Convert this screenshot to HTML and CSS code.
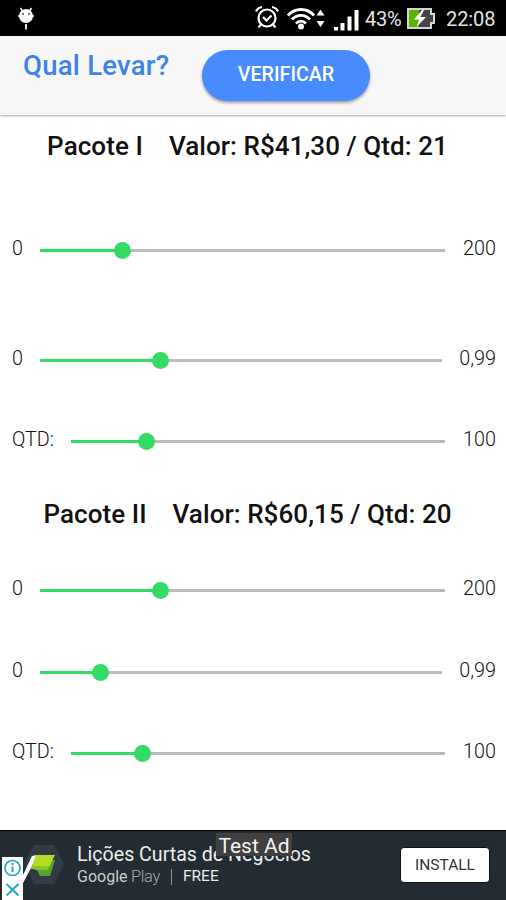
FILE: index.html
```html
<!DOCTYPE html>
<html lang="pt-BR">
<head>
    <meta charset="UTF-8">
    <meta name="viewport" content="width=device-width, initial-scale=1.0">
    <title>Qual Levar?</title>
    <link rel="stylesheet" href="styles.css">
</head>
<body>
    <div class="status-bar">
        <svg class="icon-debug" width="18" height="24" viewBox="0 0 18 24">
            <path d="M3.500 1l2 3M14.500 1l-2 3" stroke="#fff" stroke-width="1.5"/>
            <ellipse cx="9" cy="9" rx="7" ry="7" fill="#fff"/>
            <path d="M1 9h16" stroke="#fff" stroke-width="1.5"/>
            <path d="M9 17v5.500" stroke="#ddd" stroke-width="2"/>
            <circle cx="6" cy="7" r="1.100" fill="#555"/>
            <circle cx="12" cy="7" r="1.100" fill="#555"/>
        </svg>
        <div class="status-right">
            <svg class="icon-alarm" width="24" height="24" viewBox="0 0 24 24" fill="none" stroke="#fff" stroke-width="2.200">
                <circle cx="12" cy="13" r="8.500"/>
                <path d="M1 6.500C2 4 4 2.500 7 2M23 6.500C22 4 20 2.500 17 2M6 19.500l-2.500 3M18 19.500l2.500 3M8 12l3.500 3.500 5-5"/>
            </svg>
            <svg class="icon-wifi" width="38" height="24" viewBox="0 0 38 24">
                <g fill="none" stroke="#fff" stroke-width="2.800">
                    <path d="M1 9.500C8 1.500 20 1.500 27 9.500"/>
                    <path d="M5 13.500c5-5.500 13-5.500 18 0"/>
                    <path d="M9 17.500c3-3 7-3 10 0"/>
                </g>
                <circle cx="14" cy="20.500" r="3" fill="#fff"/>
                <path d="M29.500 9.500l4-6 4 6zM29.500 15l4 6 4-6z" fill="#fff"/>
            </svg>
            <svg class="icon-signal" width="25" height="22" viewBox="0 0 25 22" fill="#fff">
                <rect x="0" y="18" width="4" height="3.500"/>
                <rect x="6.500" y="14" width="4" height="7.500"/>
                <rect x="13.500" y="7.500" width="4" height="14"/>
                <rect x="20.500" y="1" width="4" height="20.500"/>
            </svg>
            <span class="battery-text">43%</span>
            <svg class="icon-battery" width="28" height="21" viewBox="0 0 28 21">
                <path d="M1 1h23v5h3v9h-3v5H1z" fill="#444" stroke="#d4d4d4" stroke-width="2"/>
                <rect x="2" y="2" width="10" height="17" fill="#59b300"/>
                <path d="M15 2L7 11.500h5L9.500 19 19 9h-5.500L17 2z" fill="#fff"/>
            </svg>
            <span class="clock">22:08</span>
        </div>
    </div>

    <header class="header">
        <h1 class="header-title">Qual Levar?</h1>
        <button type="button" class="btn">VERIFICAR</button>
    </header>

    <main class="content">
        <section class="pacote">
            <h2 class="pacote-title first"><span>Pacote I</span><span>Valor: R$41,30 / Qtd: 21</span></h2>
            <div class="range-row reais">
                <span class="label">0</span>
                <div class="track"><div class="bar" style="width: 20.4%"></div></div>
                <span class="label">200</span>
            </div>
            <div class="range-row centavos spaced">
                <span class="label">0</span>
                <div class="track"><div class="bar" style="width: 30%"></div></div>
                <span class="label">0,99</span>
            </div>
            <div class="range-row qtd">
                <span class="label">QTD:</span>
                <div class="track"><div class="bar" style="width: 20.2%"></div></div>
                <span class="label">100</span>
            </div>
        </section>

        <section class="pacote">
            <h2 class="pacote-title second"><span>Pacote II</span><span>Valor: R$60,15 / Qtd: 20</span></h2>
            <div class="range-row reais">
                <span class="label">0</span>
                <div class="track"><div class="bar" style="width: 29.8%"></div></div>
                <span class="label">200</span>
            </div>
            <div class="range-row centavos">
                <span class="label">0</span>
                <div class="track"><div class="bar" style="width: 15%"></div></div>
                <span class="label">0,99</span>
            </div>
            <div class="range-row qtd">
                <span class="label">QTD:</span>
                <div class="track"><div class="bar" style="width: 19.1%"></div></div>
                <span class="label">100</span>
            </div>
        </section>
    </main>

    <footer class="ad">
        <svg class="ad-logo" width="44" height="46" viewBox="0 0 44 46">
            <path d="M12 2h20l10 19-10 20H12L2 21z" fill="#303c43"/>
            <path d="M0 34L10 13l5-1-5 11L0 42z" fill="#fff"/>
            <path d="M29 17h4l-5 16H18l-3-6h10z" fill="#58a52c"/>
            <path d="M14 12h19l-7 14H9z" fill="#b5dc25"/>
            <path d="M9 23h18l-2 4H13z" fill="#86c62b"/>
        </svg>
        <div class="ad-text">
            <div class="ad-title">Lições Curtas de Negócios</div>
            <div class="ad-info">
                <span class="ad-google">Google</span>
                <span class="ad-play">Play</span>
                <span class="ad-divider"></span>
                <span class="ad-free">FREE</span>
            </div>
        </div>
        <button type="button" class="ad-install">INSTALL</button>
        <div class="ad-test">Test Ad</div>
        <svg class="ad-choices" width="21" height="43" viewBox="0 0 21 43">
            <rect width="21" height="43" fill="#fff"/>
            <g fill="none" stroke="#20a9c5" stroke-width="1.700">
                <circle cx="10.500" cy="11" r="7.500"/>
                <path d="M10.500 9.500V15M4.500 27l12 11.500M16.500 27l-12 11.500" stroke-width="2"/>
            </g>
            <circle cx="10.500" cy="7" r="1.200" fill="#20a9c5"/>
        </svg>
    </footer>
</body>
</html>
```
FILE: styles.css
```css
* {
    margin: 0;
    padding: 0;
    box-sizing: border-box;
}

body {
    height: 900px;
    display: flex;
    flex-direction: column;
    overflow: hidden;
    background-color: #fff;
    color: #111;
    font-family: Roboto, sans-serif;
}

svg {
    display: block;
    flex: none;
}

.status-bar {
    height: 36px;
    flex: none;
    display: flex;
    justify-content: space-between;
    padding: 0 11px 0 17px;
    background-color: #000;
    color: #e4e4e4;
}

.icon-debug {
    margin-top: 7px;
}

.status-right {
    display: flex;
    align-items: flex-start;
    font-size: 20px;
    line-height: 38px;
}

.icon-alarm {
    margin: 5px 8px 0 0;
}

.icon-wifi {
    margin: 6px 9px 0 0;
}

.icon-signal {
    margin: 9px 6px 0 0;
}

.battery-text {
    width: 38px;
    letter-spacing: -0.3px;
}

.icon-battery {
    margin: 8px 11px 0 4px;
}

.clock {
    width: 49px;
    letter-spacing: -0.1px;
}

.header {
    height: 79px;
    flex: none;
    display: flex;
    align-items: flex-start;
    background-color: #f7f7f7;
    box-shadow: 0 1px 2px rgba(0, 0, 0, 0.35);
}

.header-title {
    width: 202px;
    padding: 13px 0 0 23px;
    color: #3e83e8;
    font-size: 27.5px;
    font-weight: 500;
    letter-spacing: 0.25px;
    line-height: 34px;
    white-space: nowrap;
}

.btn {
    width: 168px;
    height: 51px;
    margin-top: 14px;
    padding-bottom: 3px;
    border: none;
    border-radius: 26px;
    background-color: #488aff;
    box-shadow: 0 2px 3px rgba(0, 0, 0, 0.35);
    color: #fff;
    font-family: inherit;
    font-size: 19.7px;
    font-weight: 500;
}

.content {
    height: 715px;
    flex: none;
}

.pacote-title {
    display: flex;
    justify-content: center;
    gap: 26px;
    font-size: 26px;
    font-weight: 500;
    letter-spacing: 0.07px;
    line-height: 32px;
    white-space: nowrap;
}

.pacote-title.first {
    height: 95px;
    padding: 15px 11px 0 0;
}

.pacote-title.second {
    height: 67px;
    padding: 15px 11px 0 0;
}

.range-row {
    height: 81.6px;
    display: grid;
    align-items: center;
    padding: 0 10px 0 11px;
}

.reais {
    grid-template-columns: 29px 405px 1fr;
}

.centavos {
    grid-template-columns: 29px 402px 1fr;
}

.qtd {
    grid-template-columns: 60px 374px 1fr;
}

.spaced {
    margin-top: 28px;
}

.label {
    margin-top: -4px;
    padding-left: 1px;
    color: #111;
    font-size: 19.8px;
    font-weight: 300;
}

.label:last-child {
    text-align: right;
}

.track {
    height: 3px;
    background-color: #bdbdbd;
}

.bar {
    height: 3px;
    display: flex;
    align-items: center;
    justify-content: flex-end;
    background-color: #32db64;
}

.bar::after {
    content: "";
    flex: none;
    width: 17px;
    height: 17px;
    margin-right: -8.5px;
    border-radius: 50%;
    background-color: #32db64;
}

.ad {
    position: relative;
    height: 70px;
    flex: none;
    display: flex;
    align-items: flex-start;
    padding: 0 17px 0 22px;
    border-top: 1px solid #000;
    background-color: #222c32;
    color: #eee;
}

.ad-logo {
    margin-top: 12px;
}

.ad-text {
    flex: 1;
    padding: 10px 0 0 11px;
    white-space: nowrap;
}

.ad-title {
    font-size: 19.6px;
    line-height: 27px;
}

.ad-info {
    display: flex;
    align-items: center;
    font-size: 16.5px;
    line-height: 17px;
}

.ad-google {
    width: 54px;
    color: #ccc;
    font-size: 16px;
}

.ad-play {
    width: 40px;
    color: #aaa;
    font-weight: 300;
    letter-spacing: -0.4px;
}

.ad-divider {
    width: 1px;
    height: 16px;
    margin-right: 11px;
    background-color: #89939a;
}

.ad-free {
    font-size: 15.5px;
}

.ad-install {
    width: 90px;
    height: 36px;
    margin: 16px -1px 0 0;
    border: 1px solid #111;
    border-radius: 4px;
    background-color: #fff;
    color: #333;
    font-family: inherit;
    font-size: 15.5px;
}

/* overlays of the ad banner */
.ad-test {
    position: absolute;
    top: 2px;
    left: 216px;
    width: 76px;
    height: 23px;
    background-color: #404040;
    color: #f2f2f2;
    font-size: 21px;
    line-height: 26px;
    text-align: center;
    white-space: nowrap;
}

.ad-choices {
    position: absolute;
    left: 2px;
    bottom: 0;
}
```
